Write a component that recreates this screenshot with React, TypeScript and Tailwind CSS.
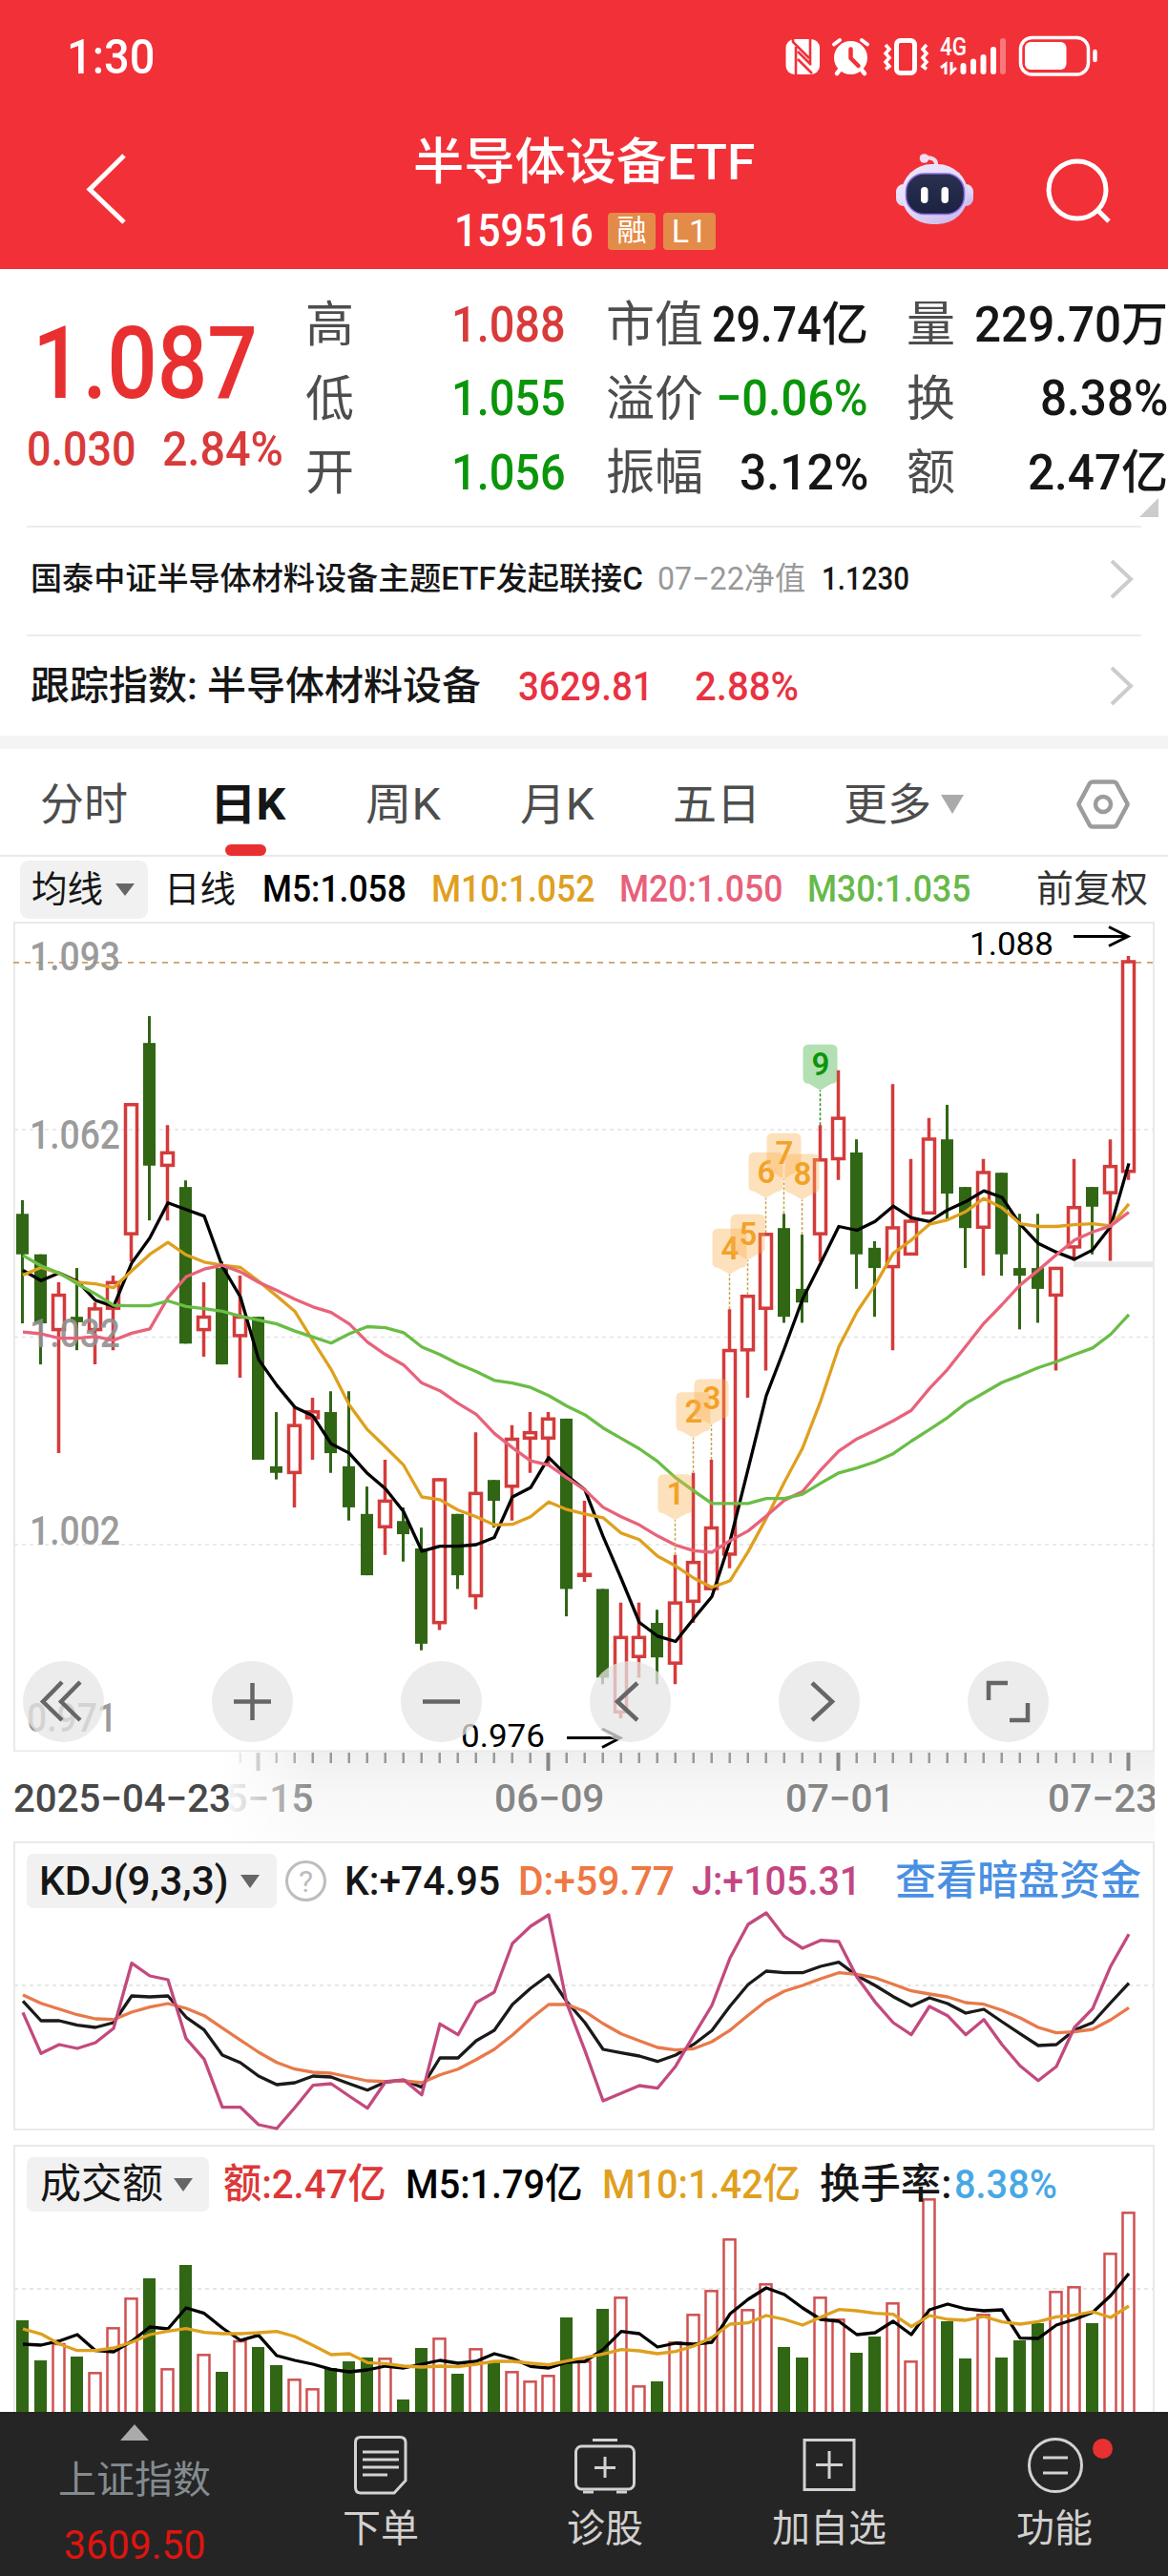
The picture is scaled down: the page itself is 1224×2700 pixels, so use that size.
import { useLayoutEffect, useRef, useState, type ReactNode } from "react";

/** Text whose glyphs are condensed or widened to fill the width of its box. */
function Fit({ className = "", children }: { className?: string; children: ReactNode }) {
  const box = useRef<HTMLSpanElement>(null);
  const text = useRef<HTMLSpanElement>(null);
  const [scale, setScale] = useState(1);
  useLayoutEffect(() => {
    if (box.current && text.current) {
      setScale(box.current.clientWidth / text.current.offsetWidth);
    }
  }, []);
  return (
    <span ref={box} className={`flex shrink-0 leading-none ${className}`}>
      <span
        ref={text}
        className="block shrink-0 origin-left whitespace-nowrap"
        style={{ transform: `scaleX(${scale})` }}
      >
        {children}
      </span>
    </span>
  );
}

const x = (i: number) => 23.5 + i * 19;

/* direction, high, body top, body bottom, low */
type Candle = ["r" | "g", number, number, number, number];
const CANDLES: Candle[] = [
  ["g", 519, 544, 618, 744], ["g", 618, 618, 744, 819], ["r", 669, 690, 758, 981], ["g", 643, 732, 742, 793],
  ["r", 706, 715, 758, 819], ["r", 657, 667, 719, 793], ["r", 342, 342, 583, 631], ["g", 183, 232, 456, 556],
  ["r", 382, 430, 458, 556], ["g", 483, 495, 781, 781], ["r", 669, 730, 758, 805], ["g", 631, 643, 819, 819],
  ["r", 657, 730, 769, 843], ["g", 732, 732, 993, 993], ["g", 906, 1005, 1017, 1029], ["r", 895, 928, 1019, 1080],
  ["r", 880, 903, 919, 993], ["g", 868, 906, 981, 1017], ["g", 868, 1005, 1080, 1104], ["g", 1042, 1092, 1204, 1204],
  ["r", 993, 1066, 1118, 1167], ["g", 1080, 1105, 1129, 1179], ["g", 1117, 1155, 1329, 1341], ["r", 1027, 1027, 1293, 1304],
  ["g", 1092, 1092, 1204, 1229], ["r", 943, 1052, 1244, 1266], ["g", 1030, 1030, 1068, 1117], ["r", 930, 953, 1044, 1104],
  ["r", 906, 941, 956, 1017], ["r", 906, 916, 956, 1005], ["g", 918, 918, 1229, 1279], ["r", 1068, 1200, 1207, 1216],
  ["g", 1229, 1229, 1391, 1403], ["r", 1254, 1315, 1456, 1465], ["r", 1254, 1315, 1355, 1391], ["g", 1267, 1291, 1354, 1403],
  ["r", 1167, 1252, 1367, 1403], ["r", 1017, 1178, 1254, 1291], ["r", 993, 1115, 1231, 1231], ["r", 718, 791, 1168, 1191],
  ["r", 692, 692, 795, 880], ["r", 579, 579, 719, 830], ["g", 544, 570, 732, 743], ["g", 582, 681, 706, 743],
  ["r", 382, 443, 583, 631], ["r", 282, 367, 446, 482], ["g", 408, 432, 618, 681], ["g", 594, 606, 643, 732],
  ["r", 307, 567, 643, 793], ["r", 444, 555, 620, 620], ["r", 369, 405, 545, 545], ["g", 345, 408, 507, 555],
  ["g", 495, 495, 570, 643], ["r", 444, 466, 571, 657], ["g", 469, 469, 618, 657], ["g", 544, 643, 657, 755],
  ["g", 544, 643, 681, 743], ["r", 641, 641, 695, 830], ["r", 444, 530, 607, 630], ["g", 495, 495, 531, 618],
  ["r", 408, 455, 508, 630], ["r", 73, 81, 469, 482],
];

const MA5 = [647, 666, 652, 667, 702, 713, 634, 588, 524, 536, 548, 640, 696, 810, 857, 897, 913, 964, 981, 1018, 1046, 1088, 1160, 1151, 1151, 1148, 1135, 1061, 1044, 989, 1022, 1048, 1133, 1210, 1290, 1315, 1325, 1283, 1243, 1142, 1010, 876, 790, 700, 634, 567, 574, 558, 530, 551, 558, 537, 522, 502, 514, 563, 598, 614, 627, 610, 567, 452];
const MA10 = [656, 642, 653, 669, 672, 679, 648, 618, 596, 619, 632, 638, 642, 667, 694, 722, 776, 828, 893, 938, 970, 1003, 1061, 1066, 1085, 1097, 1112, 1111, 1097, 1070, 1084, 1092, 1099, 1127, 1139, 1169, 1187, 1209, 1226, 1214, 1161, 1100, 1034, 972, 886, 787, 723, 674, 616, 592, 563, 555, 540, 516, 533, 562, 567, 567, 564, 562, 566, 526];
const MA20 = [760, 763, 771, 771, 768, 775, 762, 754, 697, 659, 645, 638, 650, 669, 684, 700, 714, 724, 745, 778, 801, 820, 853, 867, 890, 910, 945, 971, 995, 1003, 1026, 1048, 1080, 1097, 1112, 1132, 1149, 1159, 1162, 1141, 1123, 1096, 1067, 1051, 1012, 977, 955, 939, 922, 903, 863, 828, 786, 744, 710, 674, 647, 619, 592, 577, 566, 541];
const MA30 = [620, 639, 652, 672, 690, 711, 712, 712, 703, 713, 717, 722, 731, 738, 745, 758, 769, 780, 763, 750, 752, 761, 787, 801, 818, 832, 848, 853, 861, 876, 895, 911, 935, 954, 973, 996, 1026, 1050, 1073, 1073, 1073, 1064, 1064, 1056, 1036, 1017, 1008, 997, 982, 959, 938, 916, 890, 871, 852, 839, 825, 814, 801, 789, 764, 728];

const K_LINE = [532, 594, 594, 608, 615, 600, 516, 519, 516, 583, 623, 702, 726, 768, 795, 789, 768, 771, 792, 812, 787, 781, 803, 711, 711, 657, 624, 543, 492, 450, 534, 600, 684, 695, 705, 722, 702, 668, 625, 548, 480, 438, 443, 443, 423, 410, 452, 483, 518, 548, 522, 540, 570, 558, 597, 635, 672, 669, 623, 600, 537, 476];
const D_LINE = [513, 539, 557, 575, 588, 590, 567, 551, 540, 555, 578, 617, 655, 693, 725, 746, 756, 759, 771, 783, 785, 783, 789, 764, 746, 716, 684, 639, 588, 543, 543, 565, 603, 635, 657, 678, 686, 682, 660, 624, 577, 532, 501, 483, 462, 443, 448, 459, 479, 500, 510, 519, 537, 542, 561, 585, 615, 632, 629, 621, 591, 553];
const J_LINE = [568, 697, 669, 681, 663, 618, 413, 453, 465, 650, 715, 866, 866, 921, 933, 867, 797, 792, 831, 869, 786, 780, 827, 604, 638, 537, 504, 351, 297, 261, 540, 688, 846, 822, 798, 806, 737, 640, 546, 397, 291, 255, 329, 366, 341, 345, 457, 535, 600, 638, 549, 578, 638, 590, 669, 736, 782, 738, 615, 556, 422, 322];

const VOLUME = [576, 702, 648, 690, 739, 598, 505, 444, 727, 402, 682, 738, 639, 660, 717, 760, 790, 726, 705, 693, 694, 825, 663, 631, 744, 664, 708, 736, 766, 748, 567, 703, 540, 502, 781, 768, 643, 556, 481, 319, 541, 460, 660, 693, 502, 571, 678, 627, 520, 703, 193, 579, 696, 556, 693, 639, 585, 484, 469, 585, 364, 235];
const VOL5 = [651, 654, 641, 621, 671, 675, 642, 597, 603, 537, 554, 600, 639, 623, 687, 702, 714, 730, 738, 732, 720, 726, 714, 702, 711, 705, 681, 696, 721, 726, 708, 705, 668, 611, 618, 660, 648, 651, 645, 556, 510, 474, 495, 537, 573, 579, 621, 615, 579, 621, 543, 525, 540, 546, 543, 632, 633, 591, 573, 551, 498, 429];
const VOL10 = [603, 619, 650, 671, 671, 663, 645, 621, 610, 602, 614, 618, 618, 615, 611, 627, 655, 684, 681, 709, 712, 720, 723, 720, 722, 714, 705, 705, 711, 716, 704, 693, 682, 668, 672, 681, 674, 657, 630, 588, 584, 561, 573, 591, 566, 542, 546, 554, 557, 596, 561, 573, 576, 564, 581, 588, 580, 565, 560, 549, 567, 531];

function Line({ data, y, color }: { data: number[]; y: (v: number) => number; color: string }) {
  return (
    <polyline
      points={data.map((v, i) => `${x(i) + 0.5},${y(v).toFixed(1)}`).join(" ")}
      fill="none"
      stroke={color}
      strokeWidth="3.3"
      strokeLinejoin="round"
    />
  );
}

function Caret({ className = "" }: { className?: string }) {
  return (
    <svg className={`shrink-0 ${className}`} viewBox="0 0 20 13" preserveAspectRatio="none" fill="currentColor">
      <path d="M0 0H20L10 13Z" />
    </svg>
  );
}

function StatusIcons() {
  return (
    <svg className="ml-auto mr-[70px] h-[50px] w-[332px]" viewBox="822 35 332 50" fill="none" stroke="#fff">
      <rect x="823.500" y="41" width="35.500" height="37" rx="9" fill="#fff" stroke="none" />
      <path d="M831 41V44L848 61M834 49V78M836 54L850 68M836 62L851 77M849 41V66" stroke="#f23038" strokeWidth="2.600" />
      <circle cx="891.500" cy="60.500" r="17.500" fill="#fff" stroke="none" />
      <path d="M874 46.500L880 42M909 46.500L903 42" strokeWidth="4" strokeLinecap="round" />
      <path d="M881 72l-4 5M902 72l4 5" strokeWidth="4.500" strokeLinecap="round" />
      <path d="M891.500 51.500V61l8 8" stroke="#f23038" strokeWidth="4.500" strokeLinecap="round" strokeLinejoin="round" />
      <rect x="939.500" y="42.500" width="19" height="34" rx="4" strokeWidth="5" />
      <path d="M928 47l4 4.500-4 4.500 4 4.500-4 4.500 4 4.500-4 3M971 47l-4 4.500 4 4.500-4 4.500 4 4.500-4 4.500 4 3" strokeWidth="3.500" />
      <text x="985" y="58" fill="#fff" stroke="none" fontSize="25" fontWeight="500" textLength="28" lengthAdjust="spacingAndGlyphs">4G</text>
      <path d="M986 71l5-4v11M997 65v11l5-5" strokeWidth="3" />
      <path d="M1009.500 69V75M1020 64.500V75M1030.500 60V75M1041 52V75" strokeWidth="6" strokeLinecap="round" />
      <path d="M1051 43V75" strokeWidth="6" strokeLinecap="round" opacity=".35" />
      <rect x="1069.500" y="39.500" width="71" height="38.500" rx="12" strokeWidth="3.500" />
      <rect x="1074" y="44" width="43.500" height="29" rx="6" fill="#fff" stroke="none" />
      <path d="M1147.500 54V63" strokeWidth="4.500" strokeLinecap="round" />
    </svg>
  );
}

function Robot() {
  return (
    <svg className="h-[80px] w-[84px]" viewBox="937 158 84 80" fill="none">
      <defs>
        <linearGradient id="shell" x1="0" y1="0" x2=".6" y2="1">
          <stop offset="0" stopColor="#efe6fa" />
          <stop offset=".6" stopColor="#e3dcf8" />
          <stop offset="1" stopColor="#cdbfee" />
        </linearGradient>
        <linearGradient id="face" x1="0" y1="0" x2="0" y2="1">
          <stop offset="0" stopColor="#2a3150" />
          <stop offset="1" stopColor="#1b2242" />
        </linearGradient>
      </defs>
      <path d="M980 173q1-8-12-8" stroke="#f0dcee" strokeWidth="4" />
      <circle cx="967.500" cy="166" r="4.800" fill="#f3dcf0" />
      <rect x="938" y="193" width="81" height="23" rx="8" fill="url(#shell)" />
      <rect x="943.500" y="172" width="70" height="63" rx="32" fill="url(#shell)" />
      <rect x="948.500" y="182" width="61" height="42.500" rx="19" fill="url(#face)" stroke="#8a6be8" strokeWidth="1.500" />
      <rect x="964" y="196" width="7.500" height="17" rx="3.700" fill="#fff" />
      <rect x="985.500" y="196" width="7.500" height="17" rx="3.700" fill="#fff" />
    </svg>
  );
}

function Header() {
  return (
    <header className="h-[282px] bg-[#f23038] text-white">
      <div className="flex h-[120px] items-center pl-[70px]">
        <Fit className="w-[92px] text-[50px] font-medium">1:30</Fit>
        <StatusIcons />
      </div>
      <div className="flex h-[162px]">
        <svg className="ml-[88px] mt-[40px] h-[78px] w-[48px]" viewBox="88 160 48 78" fill="none" stroke="#fff" strokeWidth="5">
          <path d="M130 163L94 198.500L130 233" />
        </svg>
        <div className="ml-[296px] w-[362px] pt-[25px]">
          <Fit className="ml-[1px] w-[358px] text-[52px] font-medium">半导体设备ETF</Fit>
          <div className="mt-[21px] flex items-center">
            <Fit className="ml-[44px] w-[146px] text-[48px] font-medium">159516</Fit>
            <span className="ml-[15px] flex h-[39px] w-[50px] items-center justify-center rounded-[4px] bg-[#e38b49] text-[31px]">融</span>
            <span className="ml-[8px] flex h-[39px] w-[55px] items-center justify-center rounded-[4px] bg-[#e38b49] text-[34px]">L1</span>
          </div>
        </div>
        <div className="ml-[144px] mt-[38px]"><Robot /></div>
        <svg className="ml-[72px] mt-[44px] h-[72px] w-[76px]" viewBox="1093 164 76 72" fill="none" stroke="#fff" strokeWidth="5">
          <circle cx="1128" cy="199" r="30" />
          <path d="M1149 220L1161 232" />
        </svg>
      </div>
    </header>
  );
}

function Stat({ label, children }: { label: string; children: ReactNode }) {
  return (
    <div className="flex h-[77.500px] items-center justify-between">
      <span className="text-[51px] leading-none text-[#4d4d4d]">{label}</span>
      <span className="flex items-center text-[52px] font-medium leading-none">{children}</span>
    </div>
  );
}

function Quote() {
  return (
    <section className="relative flex h-[269px] pt-[20px] text-[#161616]">
      <div className="w-[320px] pt-[27px] text-[#d93a3a]">
        <Fit className="ml-[34px] w-[236px] text-[105px] font-medium text-[#e83030]">1.087</Fit>
        <div className="mt-[12px] flex pl-[28px] text-[50px] font-medium">
          <Fit className="w-[115px]">0.030</Fit>
          <Fit className="ml-[27px] w-[127px]">2.84%</Fit>
        </div>
      </div>
      <div className="w-[273px]">
        <Stat label="高"><Fit className="w-[120px] text-[#d93a3a]">1.088</Fit></Stat>
        <Stat label="低"><Fit className="w-[120px] text-[#0b950b]">1.055</Fit></Stat>
        <Stat label="开"><Fit className="w-[120px] text-[#0b950b]">1.056</Fit></Stat>
      </div>
      <div className="ml-[42px] w-[275px]">
        <Stat label="市值"><Fit className="w-[115px]">29.74</Fit><span className="text-[49px]">亿</span></Stat>
        <Stat label="溢价"><Fit className="w-[160px] text-[#0b950b]">−0.06%</Fit></Stat>
        <Stat label="振幅"><Fit className="w-[135px]">3.12%</Fit></Stat>
      </div>
      <div className="ml-[40px] w-[274px]">
        <Stat label="量"><Fit className="w-[154px]">229.70</Fit><span className="text-[49px]">万</span></Stat>
        <Stat label="换"><Fit className="w-[134px]">8.38%</Fit></Stat>
        <Stat label="额"><Fit className="w-[98px]">2.47</Fit><span className="text-[49px]">亿</span></Stat>
      </div>
      <svg className="absolute right-[10px] top-[240px] size-[20px]" viewBox="0 0 20 20"><path d="M20 0V20H0Z" fill="#ccc" /></svg>
    </section>
  );
}

function More() {
  return (
    <svg className="ml-auto mr-[6px] h-[44px] w-[28px]" viewBox="0 0 28 44" fill="none" stroke="#ccc" strokeWidth="4">
      <path d="M3 3L23 22L3 41" />
    </svg>
  );
}

function InfoRows() {
  return (
    <section className="px-[28px] text-[#161616]">
      <div className="flex h-[114px] items-center border-t-2 border-[#ececec] pb-[5px] text-[33px] font-medium">
        <Fit className="ml-[4px] w-[642px]">国泰中证半导体材料设备主题ETF发起联接C</Fit>
        <Fit className="ml-[15px] w-[155px] font-normal text-[#999]">07−22净值</Fit>
        <Fit className="ml-[17px] w-[92px]">1.1230</Fit>
        <More />
      </div>
      <div className="flex h-[106px] items-center border-t-2 border-[#ececec] text-[41px] font-medium">
        <Fit className="ml-[4px] w-[472px]">跟踪指数: 半导体材料设备</Fit>
        <Fit className="ml-[39px] w-[142px] text-[43px] text-[#e83243]">3629.81</Fit>
        <Fit className="ml-[43px] w-[109px] text-[43px] text-[#e83243]">2.88%</Fit>
        <More />
      </div>
    </section>
  );
}

function Tabs() {
  return (
    <nav className="flex h-[113px] items-center border-b-2 border-[#e9e9e9] pt-[4px] text-[46px] text-[#4d4d4d]">
      <Fit className="ml-[42px] w-[92px]">分时</Fit>
      <div className="relative ml-[86px] flex h-[109px] items-center">
        <Fit className="w-[79px] font-bold text-[#161616]">日K</Fit>
        <span className="absolute bottom-0 left-[16px] h-[12px] w-[43px] rounded-[6px] bg-[#e93030]" />
      </div>
      <Fit className="ml-[84px] w-[79px]">周K</Fit>
      <Fit className="ml-[83px] w-[78px]">月K</Fit>
      <Fit className="ml-[82px] w-[92px]">五日</Fit>
      <Fit className="ml-[87px] w-[92px]">更多</Fit>
      <Caret className="ml-[10px] h-[20px] w-[24px] text-[#aaa]" />
      <svg className="ml-[118px] h-[54px] w-[56px]" viewBox="0 0 56 54" fill="none" stroke="#9c9c9c" strokeWidth="4.500" strokeLinejoin="round">
        <path d="M17 3.500H39Q41 3.500 42 5L53 25.500Q54 27 53 28.500L42 49Q41 50.500 39 50.500H17Q15 50.500 14 49L3 28.500Q2 27 3 25.500L14 5Q15 3.500 17 3.500Z" />
        <circle cx="28" cy="27" r="8" />
      </svg>
    </nav>
  );
}

function AverageRow() {
  return (
    <div className="flex h-[68px] items-center pl-[21px] text-[38px] font-medium text-[#161616]">
      <div className="flex h-[61px] w-[134px] items-center rounded-[9px] bg-[#f1f1f1]">
        <Fit className="ml-[12px] w-[75px] font-normal">均线</Fit>
        <Caret className="ml-[13px] h-[13px] w-[20px] text-[#666]" />
      </div>
      <Fit className="ml-[17px] w-[75px] font-normal">日线</Fit>
      <Fit className="ml-[28px] w-[151px] text-black">M5:1.058</Fit>
      <Fit className="ml-[26px] w-[171px] text-[#dfa01f]">M10:1.052</Fit>
      <Fit className="ml-[26px] w-[171px] text-[#e8607a]">M20:1.050</Fit>
      <Fit className="ml-[26px] w-[171px] text-[#68b94a]">M30:1.035</Fit>
      <Fit className="ml-[69px] w-[117px] text-[39px] font-normal text-[#333]">前复权</Fit>
    </div>
  );
}

/** Chart-space value to pixel row inside the candle panel. */
const py = (v: number) => v * 0.574 - 6;

function PriceLabel({ y, x0 = 31, children }: { y: number; x0?: number; children: string }) {
  return (
    <text x={x0} y={y} fontSize="42" fontWeight="500" fill="#919191" fillOpacity=".92" textLength="95" lengthAdjust="spacingAndGlyphs">
      {children}
    </text>
  );
}

const BADGES = [36, 37, 38, 39, 40, 41, 42, 43, 44];

function Candles() {
  return (
    <svg className="absolute inset-0 h-[870px] w-[1224px]" viewBox="0 0 1224 870" fill="none">
      <rect x="15" y="1" width="1194" height="868.500" stroke="#e9e9e9" strokeWidth="2" />
      {[217.900, 435.400, 653].map((y) => (
        <path key={y} d={`M15 ${y}H1209`} stroke="#e3e3e3" strokeWidth="1.500" strokeDasharray="4 4" />
      ))}
      <path d="M14 42.800H1209" stroke="#c8a06a" strokeWidth="1.800" strokeDasharray="6 6" />
      <path d="M1125 359.300H1209" stroke="#e9e9e9" strokeWidth="6" />
      {CANDLES.map(([dir, hi, top, bottom, lo], i) =>
        dir === "g" ? (
          <g key={i} fill="#306614">
            <rect x={x(i) - 1.500} y={py(hi)} width="3" height={py(lo) - py(hi)} />
            <rect x={x(i) - 6.500} y={py(top)} width="13" height={py(bottom) - py(top)} />
          </g>
        ) : (
          <g key={i} stroke="#d43b3b" strokeWidth="3.500">
            <path d={`M${x(i)} ${py(hi)}V${py(top) + 1}M${x(i)} ${py(bottom) - 1}V${py(lo)}`} />
            <rect x={x(i) - 6} y={py(top) + 1.500} width="12" height={Math.max(py(bottom) - py(top) - 3, 0.500)} />
          </g>
        ),
      )}
      <PriceLabel y={51}>1.093</PriceLabel>
      <PriceLabel y={238}>1.062</PriceLabel>
      <PriceLabel y={446}>1.032</PriceLabel>
      <PriceLabel y={653}>1.002</PriceLabel>
      <PriceLabel y={849} x0={28}>0.971</PriceLabel>
      <Line data={MA5} y={py} color="#000" />
      <Line data={MA10} y={py} color="#dea01e" />
      <Line data={MA20} y={py} color="#e8637a" />
      <Line data={MA30} y={py} color="#6abd45" />
      {BADGES.map((i, n) => {
        const cx = x(i);
        const tip = py(CANDLES[i][1]);
        const top = tip - 84.500;
        const last = n === 8;
        return (
          <g key={i}>
            <path d={`M${cx} ${tip}V${top + 48}`} stroke={last ? "#2f8a2f" : "#c9a24a"} strokeWidth="1.500" strokeDasharray="3 2" />
            <path
              d={`M${cx - 12} ${top}H${cx + 12}Q${cx + 18} ${top} ${cx + 18} ${top + 6}V${top + 35}Q${cx + 18} ${top + 41} ${cx + 12} ${top + 41}L${cx} ${top + 48}L${cx - 12} ${top + 41}Q${cx - 18} ${top + 41} ${cx - 18} ${top + 35}V${top + 6}Q${cx - 18} ${top} ${cx - 12} ${top}Z`}
              fill={last ? "#5fbf5f" : "#fbb04f"}
              fillOpacity={last ? 0.48 : 0.38}
            />
            <text x={cx + 0.5} y={top + 32} textAnchor="middle" fontSize="33" fontWeight="600" fill={last ? "#0a960a" : "#f2a227"}>
              {n + 1}
            </text>
          </g>
        );
      })}
      <text x="1016" y="35" fontSize="34" fill="#000" textLength="88" lengthAdjust="spacingAndGlyphs">1.088</text>
      <path d="M1125 15.500H1182M1162 5.500L1182 15.500L1162 25.500" stroke="#000" strokeWidth="3" />
      <text x="483" y="865" fontSize="34" fill="#000" textLength="88" lengthAdjust="spacingAndGlyphs">0.976</text>
      <path d="M594 855.600H650M631 846L650 855.600L631 865.500" stroke="#000" strokeWidth="3" />
    </svg>
  );
}

const CONTROLS = [
  "M41 22L21 42.500L41 62M60 22L40 42.500L60 62",
  "M23 42.500H62M42.500 23V62",
  "M23 42.500H62",
  "M50 23L29 42.500L50 62",
  "M35 23L56 42.500L35 62",
  "M22 41V23H42M63 44V62H44",
];

function CandlePanel() {
  return (
    <section className="relative h-[870px]">
      <Candles />
      <div className="absolute left-[24px] top-[775px] flex gap-[113px]">
        {CONTROLS.map((d) => (
          <button key={d} className="size-[85px] rounded-full bg-[#e6e6e6]/75">
            <svg viewBox="0 0 85 85" fill="none" stroke="#666" strokeWidth="4.500"><path d={d} /></svg>
          </button>
        ))}
      </div>
    </section>
  );
}

function Axis() {
  return (
    <section className="relative flex h-[94px] items-center bg-linear-to-b from-[#efefef] via-[#f8f8f8] to-[#fbfbfb] text-[40px] font-medium text-[#858585]">
      <svg className="absolute left-0 top-0 h-[20px] w-[1224px]" viewBox="0 0 1224 20">
        {Array.from({ length: 50 }, (_, n) => n + 12).map((i) =>
          (i - 13) % 16 === 0 ? (
            <rect key={i} x={x(i) - 2} y="1" width="4" height="19" fill="#888" />
          ) : (
            <rect key={i} x={x(i) - 1} y="1" width="2.500" height="11" fill="#999" />
          ),
        )}
      </svg>
      <Fit className="ml-[213px] mt-[5px] w-[115px]">05−15</Fit>
      <Fit className="ml-[190px] mt-[5px] w-[115px]">06−09</Fit>
      <Fit className="ml-[190px] mt-[5px] w-[114px]">07−01</Fit>
      <Fit className="ml-[161px] mt-[5px] w-[115px]">07−23</Fit>
      <div className="absolute inset-y-0 left-0 flex w-[330px] items-center bg-linear-to-r from-white from-70% to-white/0 text-[#484848]">
        <Fit className="ml-[14px] mt-[5px] w-[228px]">2025−04−23</Fit>
      </div>
      <div className="absolute inset-y-0 right-0 w-[14px] bg-white" />
    </section>
  );
}

const ky = (v: number) => v / 3 - 10;

function KdjPanel() {
  return (
    <section className="relative h-[318px] text-[43px] font-medium">
      <svg className="absolute inset-0 h-[304px] w-[1224px]" viewBox="0 0 1224 304" fill="none">
        <rect x="15" y="1" width="1194" height="301" stroke="#e9e9e9" strokeWidth="2" />
        <path d="M15 151H1209" stroke="#e6e6e6" strokeWidth="2" strokeDasharray="4 4" />
        <Line data={K_LINE} y={ky} color="#1a1a1a" />
        <Line data={D_LINE} y={ky} color="#e8794a" />
        <Line data={J_LINE} y={ky} color="#c24a7e" />
      </svg>
      <div className="relative flex h-[57px] translate-y-[13px] items-center pl-[28px]">
        <div className="flex h-[57px] w-[262px] items-center rounded-[7px] bg-[#f1f1f1] text-[#161616]">
          <Fit className="ml-[13px] w-[199px]">KDJ(9,3,3)</Fit>
          <Caret className="ml-[12px] h-[14px] w-[20px] text-[#666]" />
        </div>
        <span className="ml-[9px] flex size-[43px] items-center justify-center rounded-full border-[3px] border-[#bdbdbd] text-[32px] font-normal leading-none text-[#bdbdbd]">?</span>
        <Fit className="ml-[19px] w-[163px] text-[#161616]">K:+74.95</Fit>
        <Fit className="ml-[19px] w-[164px] text-[#ee7844]">D:+59.77</Fit>
        <Fit className="ml-[18px] w-[177px] text-[#c24682]">J:+105.31</Fit>
        <Fit className="ml-[36px] w-[258px] text-[#4a90e2]">查看暗盘资金</Fit>
      </div>
    </section>
  );
}

const vy = (v: number) => v / 3 - 8;

function VolumePanel() {
  return (
    <section className="relative h-[280px] overflow-hidden text-[43px] font-medium">
      <svg className="absolute inset-0 h-[280px] w-[1224px]" viewBox="0 0 1224 280" fill="none">
        <path d="M15 280V1H1209V280" stroke="#e9e9e9" strokeWidth="2" />
        <path d="M15 151H1209" stroke="#e6e6e6" strokeWidth="2" strokeDasharray="4 4" />
        {VOLUME.map((v, i) =>
          CANDLES[i][0] === "g" ? (
            <rect key={i} x={x(i) - 6.500} y={vy(v)} width="13" height="280" fill="#306614" />
          ) : (
            <rect key={i} x={x(i) - 6} y={vy(v) + 1} width="12" height="300" stroke="#cf5050" strokeWidth="2.500" />
          ),
        )}
        <Line data={VOL5} y={vy} color="#000" />
        <Line data={VOL10} y={vy} color="#dea01e" />
      </svg>
      <div className="relative flex h-[57px] translate-y-[13px] items-center pl-[28px]">
        <div className="flex h-[57px] w-[191px] items-center rounded-[7px] bg-[#f1f1f1] text-[#161616]">
          <Fit className="ml-[14px] w-[129px] font-normal">成交额</Fit>
          <Caret className="ml-[11px] h-[14px] w-[20px] text-[#666]" />
        </div>
        <Fit className="ml-[15px] w-[171px] text-[#dd3838]">额:2.47亿</Fit>
        <Fit className="ml-[20px] w-[186px] text-black">M5:1.79亿</Fit>
        <Fit className="ml-[20px] w-[208px] text-[#dfa01f]">M10:1.42亿</Fit>
        <Fit className="ml-[20px] w-[138px] text-[#161616]">换手率:</Fit>
        <Fit className="ml-[3px] w-[108px] text-[#48a8e5]">8.38%</Fit>
      </div>
    </section>
  );
}

function NavItem({ label, className, children }: { label: string; className: string; children: ReactNode }) {
  return (
    <div className={`flex flex-col items-center pt-[22px] ${className}`}>
      <svg className="h-[68px] w-[68px]" viewBox="0 0 68 68" fill="none" stroke="#d2d2d2" strokeWidth="3">
        {children}
      </svg>
      <span className="mt-[13px] text-[40px] leading-none">{label}</span>
    </div>
  );
}

function BottomNav() {
  return (
    <nav className="relative flex h-[172px] bg-[#252525] text-[#d2d0cf]">
      <div className="flex w-[282px] flex-col items-center">
        <svg className="mt-[13px] h-[17px] w-[30px]" viewBox="0 0 30 17"><path d="M15 0L30 17H0Z" fill="#aaa" /></svg>
        <span className="mt-[22px] text-[40px] leading-none text-[#848b90]">上证指数</span>
        <Fit className="mt-[26px] w-[148px] text-[43px] text-[#e0140f]">3609.50</Fit>
      </div>
      <NavItem label="下单" className="w-[234px]">
        <path d="M13 4.500H54Q60 4.500 60 10V50L48 63H13Q7.500 63 7.500 57V10Q7.500 4.500 13 4.500Z" />
        <path d="M15 20H53M15 28H53M15 36H53M15 44H41" />
      </NavItem>
      <NavItem label="诊股" className="w-[236px]">
        <rect x="3.500" y="14" width="61" height="45" rx="6" />
        <path d="M21 7.500H47M34 25V47M23 36.500H45M11 62H22M46 62H57" />
      </NavItem>
      <NavItem label="加自选" className="w-[234px]">
        <rect x="8" y="7.500" width="52" height="52" />
        <path d="M34 19V48M20 33.500H48" />
      </NavItem>
      <NavItem label="功能" className="w-[238px]">
        <circle cx="35" cy="34" r="27.500" />
        <path d="M22 26H48M22 42H48" />
      </NavItem>
      <span className="absolute left-[1145px] top-[28px] size-[21px] rounded-full bg-[#e93030]" />
    </nav>
  );
}

export default function App() {
  return (
    <main className="w-[1224px] overflow-hidden bg-white font-['Roboto','Noto_Sans_CJK_SC',sans-serif]">
      <Header />
      <Quote />
      <InfoRows />
      <div className="h-[14px] bg-[#f4f4f4]" />
      <Tabs />
      <AverageRow />
      <CandlePanel />
      <Axis />
      <KdjPanel />
      <VolumePanel />
      <BottomNav />
    </main>
  );
}
